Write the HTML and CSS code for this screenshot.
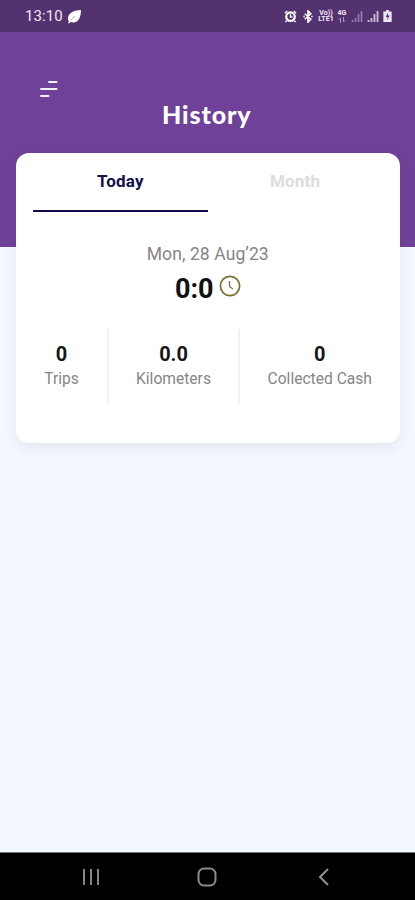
FILE: index.html
```html
<!DOCTYPE html>
<html lang="en">
<head>
<meta charset="utf-8">
<title>History</title>
<link rel="stylesheet" href="styles.css">
</head>
<body>
<div class="screen">
  <div class="status">
    <span class="time">13:10</span>
    <svg class="leaf" width="15" height="15" viewBox="0 0 15 15"><path d="M14 1C7 1 1 4 1 9.500C1 11 1.500 12 2 12.500L1 14L2 14.500L3.500 13C11 15 14 9 14 1Z" fill="#fff"/><path d="M3.500 11.500L8 7" stroke="#a48fb6" stroke-width=".7"/></svg>
    <div class="indicators">
      <svg width="13" height="13" viewBox="0 0 14 14"><circle cx="7" cy="7.200" r="4.600" fill="none" stroke="#fff" stroke-width="2.400"/><path d="M1 3.500L3.500 1M13 3.500L10.500 1M3 11.500L1.500 13M11 11.500L12.500 13M7 4.500V7.500H9" fill="none" stroke="#fff" stroke-width="1.500"/></svg>
      <svg class="bluetooth" width="12" height="13" viewBox="0 0 12 14"><path d="M2.500 4L9 10L6 13V1L9 4L2.500 10M1 7h1.500M9.500 7H11" fill="none" stroke="#fff" stroke-width="1.700"/></svg>
      <div class="volte"><span>Vo))</span><span>LTE1</span></div>
      <div class="network"><span>4G</span><svg width="8" height="6" viewBox="0 0 8 6"><path d="M2.500 6V1L1 2.500M5.500 0V5L7 3.500" fill="none" stroke="#a995bd"/></svg></div>
      <svg class="signal" width="12" height="12" viewBox="0 0 12 12"><path d="M1.500 12V10M4.500 12V8M7.500 12V4M10.500 12V1" stroke="#9780ae" stroke-width="1.600"/></svg>
      <svg class="signal" width="12" height="12" viewBox="0 0 12 12"><path d="M1.500 12V10M4.500 12V8M7.500 12V4M10.500 12V1" stroke="#cbbed7" stroke-width="1.800"/></svg>
      <svg class="battery" width="9" height="12" viewBox="0 0 9 13"><path d="M3 0H6V1.500H9V13H0V1.500H3Z" fill="#eee8f2"/><path d="M5 3L2.500 7.500H4.500L4 11L7 6H5Z" fill="#59377c"/></svg>
    </div>
  </div>
  <header class="header">
    <svg class="menu" width="18" height="18" viewBox="0 0 18 18"><path d="M9 2H16.500M1 9H16.500M1 16H8.500" stroke="#f5eff8" stroke-width="1.900" stroke-linecap="round"/></svg>
    <h1>History</h1>
  </header>
  <main class="card">
    <div class="tabs">
      <div class="tab active"><span>Today</span></div>
      <div class="tab"><span>Month</span></div>
    </div>
    <div class="date"><span>Mon, 28 Aug’23</span></div>
    <div class="duration"><strong>0:0</strong><svg width="22" height="22" viewBox="0 0 22 22"><circle cx="11" cy="11" r="9.600" fill="none" stroke="#777231" stroke-width="1.700"/><path d="M10.500 6V11.500L14 14" fill="none" stroke="#77735b" stroke-width="1.300"/></svg></div>
    <div class="stats">
      <div class="stat"><b>0</b><span>Trips</span></div>
      <div class="stat"><b>0.0</b><span>Kilometers</span></div>
      <div class="stat"><b>0</b><span>Collected Cash</span></div>
    </div>
  </main>
  <nav class="navbar">
    <svg width="20" height="20" viewBox="0 0 20 20"><path d="M3 2V18M10 2V18M17 2V18" stroke="#858585" stroke-width="2"/></svg>
    <svg width="20" height="20" viewBox="0 0 20 20"><rect x="1.500" y="1.500" width="17" height="17" rx="5.500" fill="none" stroke="#8c8c8c" stroke-width="2"/></svg>
    <svg width="20" height="20" viewBox="0 0 20 20"><path d="M15 2L7 10L15 18" fill="none" stroke="#929292" stroke-width="2"/></svg>
  </nav>
</div>
</body>
</html>
```
FILE: styles.css
```css
* { box-sizing: border-box; }
body { margin: 0; font-family: Roboto, "Liberation Sans", sans-serif; }
svg { display: block; flex: none; }
.screen { height: 900px; display: flex; flex-direction: column; background: #f4f8ff; overflow: hidden; }
.status { height: 32px; flex: none; display: flex; align-items: center; padding: 0 23px 0 25px; background: #54326f; color: #f1e9f5; }
.time { font-size: 15px; line-height: 18px; letter-spacing: .1px; }
.leaf { margin-left: 4px; }
.indicators { display: flex; align-items: center; margin-left: auto; }
.bluetooth { margin-left: 5px; }
.volte { display: flex; flex-direction: column; align-items: center; width: 16px; margin-left: 4px; font-size: 7px; line-height: 6.5px; font-weight: 700; }
.network { display: flex; flex-direction: column; align-items: center; width: 10px; margin-left: 3px; font-size: 7px; line-height: 7px; font-weight: 700; }
.signal { margin-left: 4px; }
.battery { margin-left: 4px; }
.header { height: 215px; flex: none; padding: 48px 0 0 40px; background: #704199; }
.header h1 { width: 335px; margin: 1px 0 0; padding-left: 122px; color: #fff; font: 900 25px/30px Lato, sans-serif; letter-spacing: .9px; }
.card { height: 290px; flex: none; margin: -94px 15.5px 0 16px; border-radius: 13px; background: #fff; box-shadow: 0 5px 14px rgba(50, 60, 75, .09); }
.tabs { display: flex; padding: 0 17px; }
.tab { width: 175px; height: 59px; padding-top: 17px; text-align: center; font-size: 17px; line-height: 22px; letter-spacing: .2px; font-weight: 700; color: #dadde0; }
.active { border-bottom: 2px solid #13094f; color: #15104e; }
.date { margin-top: 30px; text-align: center; font-size: 17.5px; line-height: 24px; letter-spacing: .1px; color: #858585; }
.duration { display: flex; justify-content: center; align-items: center; gap: 5px; height: 34px; margin-top: 6px; font-size: 27px; line-height: 34px; color: #111; }
.duration svg { margin-top: -6px; }
.stats { display: grid; grid-template-columns: 93px 131px 1fr; height: 75px; margin-top: 23px; }
.stat { display: flex; flex-direction: column; align-items: center; padding-top: 13px; border-right: 2px solid #f2f2f2; color: #868686; font-size: 15.6px; line-height: 24px; }
.stat:last-child { border: 0; }
.stat b { color: #171717; font-size: 20px; line-height: 25px; }
.navbar { display: flex; justify-content: space-between; height: 48px; margin-top: auto; padding: 14px 82px 0 81px; background: #000; border-top: 1px solid #77797b; }
```
